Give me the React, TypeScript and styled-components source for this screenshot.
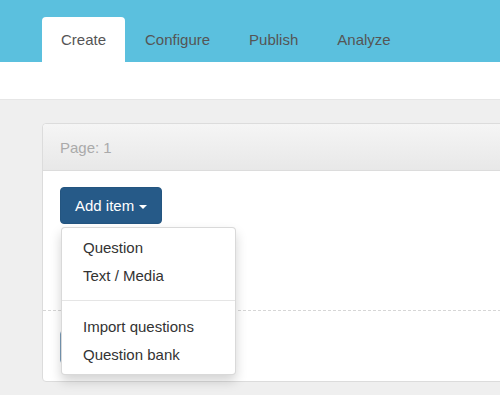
import React from "react";
import styled, { createGlobalStyle } from "styled-components";

const GlobalStyle = createGlobalStyle`
  html, body {
    margin: 0;
    padding: 0;
    background: #efefef;
    font-family: "Liberation Sans", Arial, sans-serif;
    overflow: hidden;
  }
  * {
    box-sizing: border-box;
  }
`;

const Page = styled.div`
  width: 500px;
  height: 395px;
  overflow: hidden;
`;

const TopBar = styled.nav`
  height: 62px;
  background: #5bc0de;
  display: flex;
  align-items: flex-end;
  gap: 1px;
  padding-left: 42px;
`;

const Tab = styled.div<{ $active?: boolean }>`
  height: 45px;
  padding: 0 19px;
  display: flex;
  align-items: center;
  font-size: 15px;
  color: #555;
  border-radius: 4px 4px 0 0;
  background: ${(p) => (p.$active ? "#fff" : "transparent")};
`;

const SubBar = styled.div`
  height: 38px;
  background: #fff;
  border-bottom: 1px solid #e6e6e6;
`;

const Main = styled.main`
  padding: 23px 0 0 42px;
`;

const Card = styled.section`
  width: 500px;
  background: #fff;
  border: 1px solid #dcdcdc;
  border-radius: 4px;
`;

const CardHeader = styled.header`
  height: 47px;
  padding-left: 17px;
  display: flex;
  align-items: center;
  font-size: 15px;
  color: #aaa;
  background: linear-gradient(to bottom, #f5f5f5 0%, #e8e8e8 100%);
  border-bottom: 1px solid #dcdcdc;
  border-radius: 4px 4px 0 0;
`;

const CardBody = styled.div`
  padding: 16px 0 0 17px;
`;

const MenuWrap = styled.div`
  position: relative;
  display: inline-block;
`;

const PrimaryButton = styled.button`
  height: 37px;
  padding: 0 14px;
  border: 1px solid #245580;
  border-radius: 4px;
  background: #265a88;
  color: #fff;
  font-family: inherit;
  font-size: 15px;
  display: flex;
  align-items: center;
  gap: 5px;
`;

const Caret = styled.span`
  width: 0;
  height: 0;
  border-top: 4px solid #fff;
  border-left: 4px solid transparent;
  border-right: 4px solid transparent;
  margin-top: 2px;
`;

const DropZone = styled.div`
  height: 87px;
  margin-left: -17px;
  border-bottom: 1px dashed #d6d6d6;
`;

const Footer = styled.div`
  padding: 19px 0 17px;
`;

const GhostButton = styled.div`
  width: 120px;
  height: 34px;
  border: 1px solid #7b9cb9;
  border-radius: 4px;
  background: #fff;
`;

const Menu = styled.ul`
  position: absolute;
  top: 40px;
  left: 1px;
  z-index: 10;
  width: 175px;
  margin: 0;
  padding: 5px 0 6px;
  list-style: none;
  background: #fff;
  border: 1px solid rgba(0, 0, 0, 0.15);
  border-radius: 4px;
  box-shadow: 0 6px 12px rgba(0, 0, 0, 0.175);
`;

const MenuItem = styled.li`
  height: 28px;
  padding: 0 21px;
  display: flex;
  align-items: center;
  font-size: 15px;
  color: #333;
  white-space: nowrap;
`;

const Divider = styled.li`
  height: 1px;
  margin: 11px 0;
  background: #e5e5e5;
`;

const tabs = ["Create", "Configure", "Publish", "Analyze"];

export default function App() {
  return (
    <Page>
      <GlobalStyle />
      <TopBar>
        {tabs.map((t, i) => (
          <Tab key={t} $active={i === 0}>
            {t}
          </Tab>
        ))}
      </TopBar>
      <SubBar />
      <Main>
        <Card>
          <CardHeader>Page: 1</CardHeader>
          <CardBody>
            <MenuWrap>
              <PrimaryButton>
                Add item <Caret />
              </PrimaryButton>
              <Menu>
                <MenuItem>Question</MenuItem>
                <MenuItem>Text / Media</MenuItem>
                <Divider />
                <MenuItem>Import questions</MenuItem>
                <MenuItem>Question bank</MenuItem>
              </Menu>
            </MenuWrap>
            <DropZone />
            <Footer>
              <GhostButton />
            </Footer>
          </CardBody>
        </Card>
      </Main>
    </Page>
  );
}
